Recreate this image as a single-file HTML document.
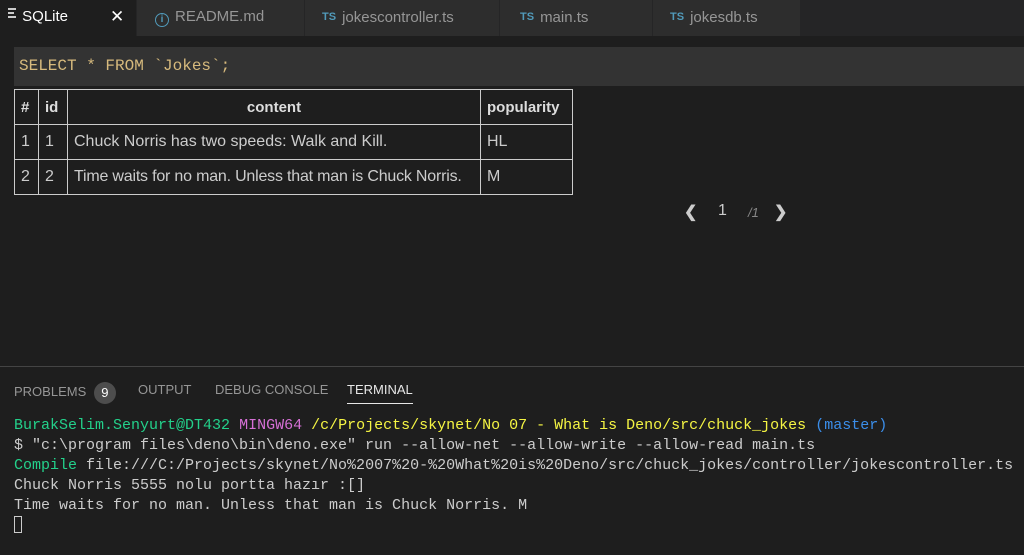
<!DOCTYPE html>
<html><head><meta charset="utf-8"><style>
*{margin:0;padding:0;box-sizing:border-box}
body{width:1024px;height:555px;background:#1e1e1e;overflow:hidden;font-family:"Liberation Sans",sans-serif;color:#ccc;position:relative}
.tabs{position:absolute;left:0;top:0;width:1024px;height:36px;background:#252526}
.tab{position:absolute;top:0;height:36px;background:#2d2d2d;border-right:1px solid #252526;font-size:15px;color:#969696;line-height:34px;white-space:nowrap}
.ts{color:#519aba;font-size:11px;font-weight:bold;margin-right:6px;vertical-align:2px}
.q{position:absolute;left:14px;top:47px;width:1010px;height:39px;background:#333;font-family:"Liberation Mono",monospace;font-size:16px;color:#d7ba7d;line-height:38px;padding-left:5px}
table{position:absolute;left:14px;top:89px;border-collapse:collapse;font-size:16px;color:#ccc}
td,th{border:1px solid #ccc;height:35px;padding:0 6px;text-align:left;white-space:nowrap}
th{font-weight:bold;color:#ddd;font-size:15px}
.pg{position:absolute;top:202px;font-size:16px;color:#ccc}
.sep{position:absolute;left:0;top:366px;width:1024px;height:1px;background:#444}
.pt{position:absolute;top:382px;font-size:13px;color:#969696;white-space:nowrap}
.term{position:absolute;left:14px;top:416px;font-family:"Liberation Mono",monospace;font-size:15px;line-height:20px;color:#ccc;white-space:pre;letter-spacing:0}
.g{color:#23d18b}.m{color:#d670d6}.y{color:#f5f543}.b{color:#3b8eea}
</style></head><body>
<div class="tabs">
<div class="tab" style="left:0;width:137px;background:#1e1e1e;color:#fff;padding-left:8px"><span style="display:inline-block;width:10px;vertical-align:1px"><span style="display:block;height:2px;width:8px;background:#ccc;margin:2px 0"></span><span style="display:block;height:2px;width:6px;background:#ccc;margin:2px 0"></span><span style="display:block;height:2px;width:8px;background:#ccc;margin:2px 0"></span></span> SQLite<span style="position:absolute;left:110px;font-size:17px">✕</span></div>
<div class="tab" style="left:137px;width:168px;padding-left:18px"><span style="display:inline-block;width:14px;height:14px;border:1.5px solid #519aba;border-radius:50%;color:#519aba;font-size:10px;line-height:11px;text-align:center;font-weight:bold;vertical-align:-1px;margin-right:6px">i</span>README.md</div>
<div class="tab" style="left:305px;width:195px;padding-left:17px"><span class="ts">TS</span>jokescontroller.ts</div>
<div class="tab" style="left:500px;width:153px;padding-left:20px"><span class="ts">TS</span>main.ts</div>
<div class="tab" style="left:653px;width:148px;padding-left:17px"><span class="ts">TS</span>jokesdb.ts</div>
</div>
<div class="q">SELECT * FROM `Jokes`;</div>
<table>
<tr><th style="width:24px">#</th><th style="width:29px">id</th><th style="width:413px;text-align:center">content</th><th style="width:92px">popularity</th></tr>
<tr><td>1</td><td>1</td><td>Chuck Norris has two speeds: Walk and Kill.</td><td>HL</td></tr>
<tr><td>2</td><td>2</td><td style="letter-spacing:-0.2px">Time waits for no man. Unless that man is Chuck Norris.</td><td>M</td></tr>
</table>
<div class="pg" style="left:684px;font-weight:bold">❮</div>
<div class="pg" style="left:718px">1</div>
<div class="pg" style="left:748px;font-size:13px;top:205px;color:#888;font-style:italic">/1</div>
<div class="pg" style="left:774px;font-weight:bold">❯</div>
<div class="sep"></div>
<div class="pt" style="left:14px">PROBLEMS <span style="display:inline-block;width:22px;height:22px;border-radius:50%;background:#4d4d4d;color:#fff;text-align:center;line-height:22px;margin-left:4px;vertical-align:-1px">9</span></div>
<div class="pt" style="left:138px">OUTPUT</div>
<div class="pt" style="left:215px">DEBUG CONSOLE</div>
<div class="pt" style="left:347px;color:#e7e7e7">TERMINAL<div style="height:1px;background:#e7e7e7;margin-top:6px"></div></div>
<div class="term"><span class="g">BurakSelim.Senyurt@DT432</span> <span class="m">MINGW64</span> <span class="y">/c/Projects/skynet/No 07 - What is Deno/src/chuck_jokes</span> <span class="b">(master)</span>
$ "c:\program files\deno\bin\deno.exe" run --allow-net --allow-write --allow-read main.ts
<span class="g">Compile</span> file:///C:/Projects/skynet/No%2007%20-%20What%20is%20Deno/src/chuck_jokes/controller/jokescontroller.ts
Chuck Norris 5555 nolu portta hazır :[]
Time waits for no man. Unless that man is Chuck Norris. M
<span style="display:inline-block;width:8px;height:17px;border:1px solid #ccc;vertical-align:-3px"></span></div>
</body></html>
